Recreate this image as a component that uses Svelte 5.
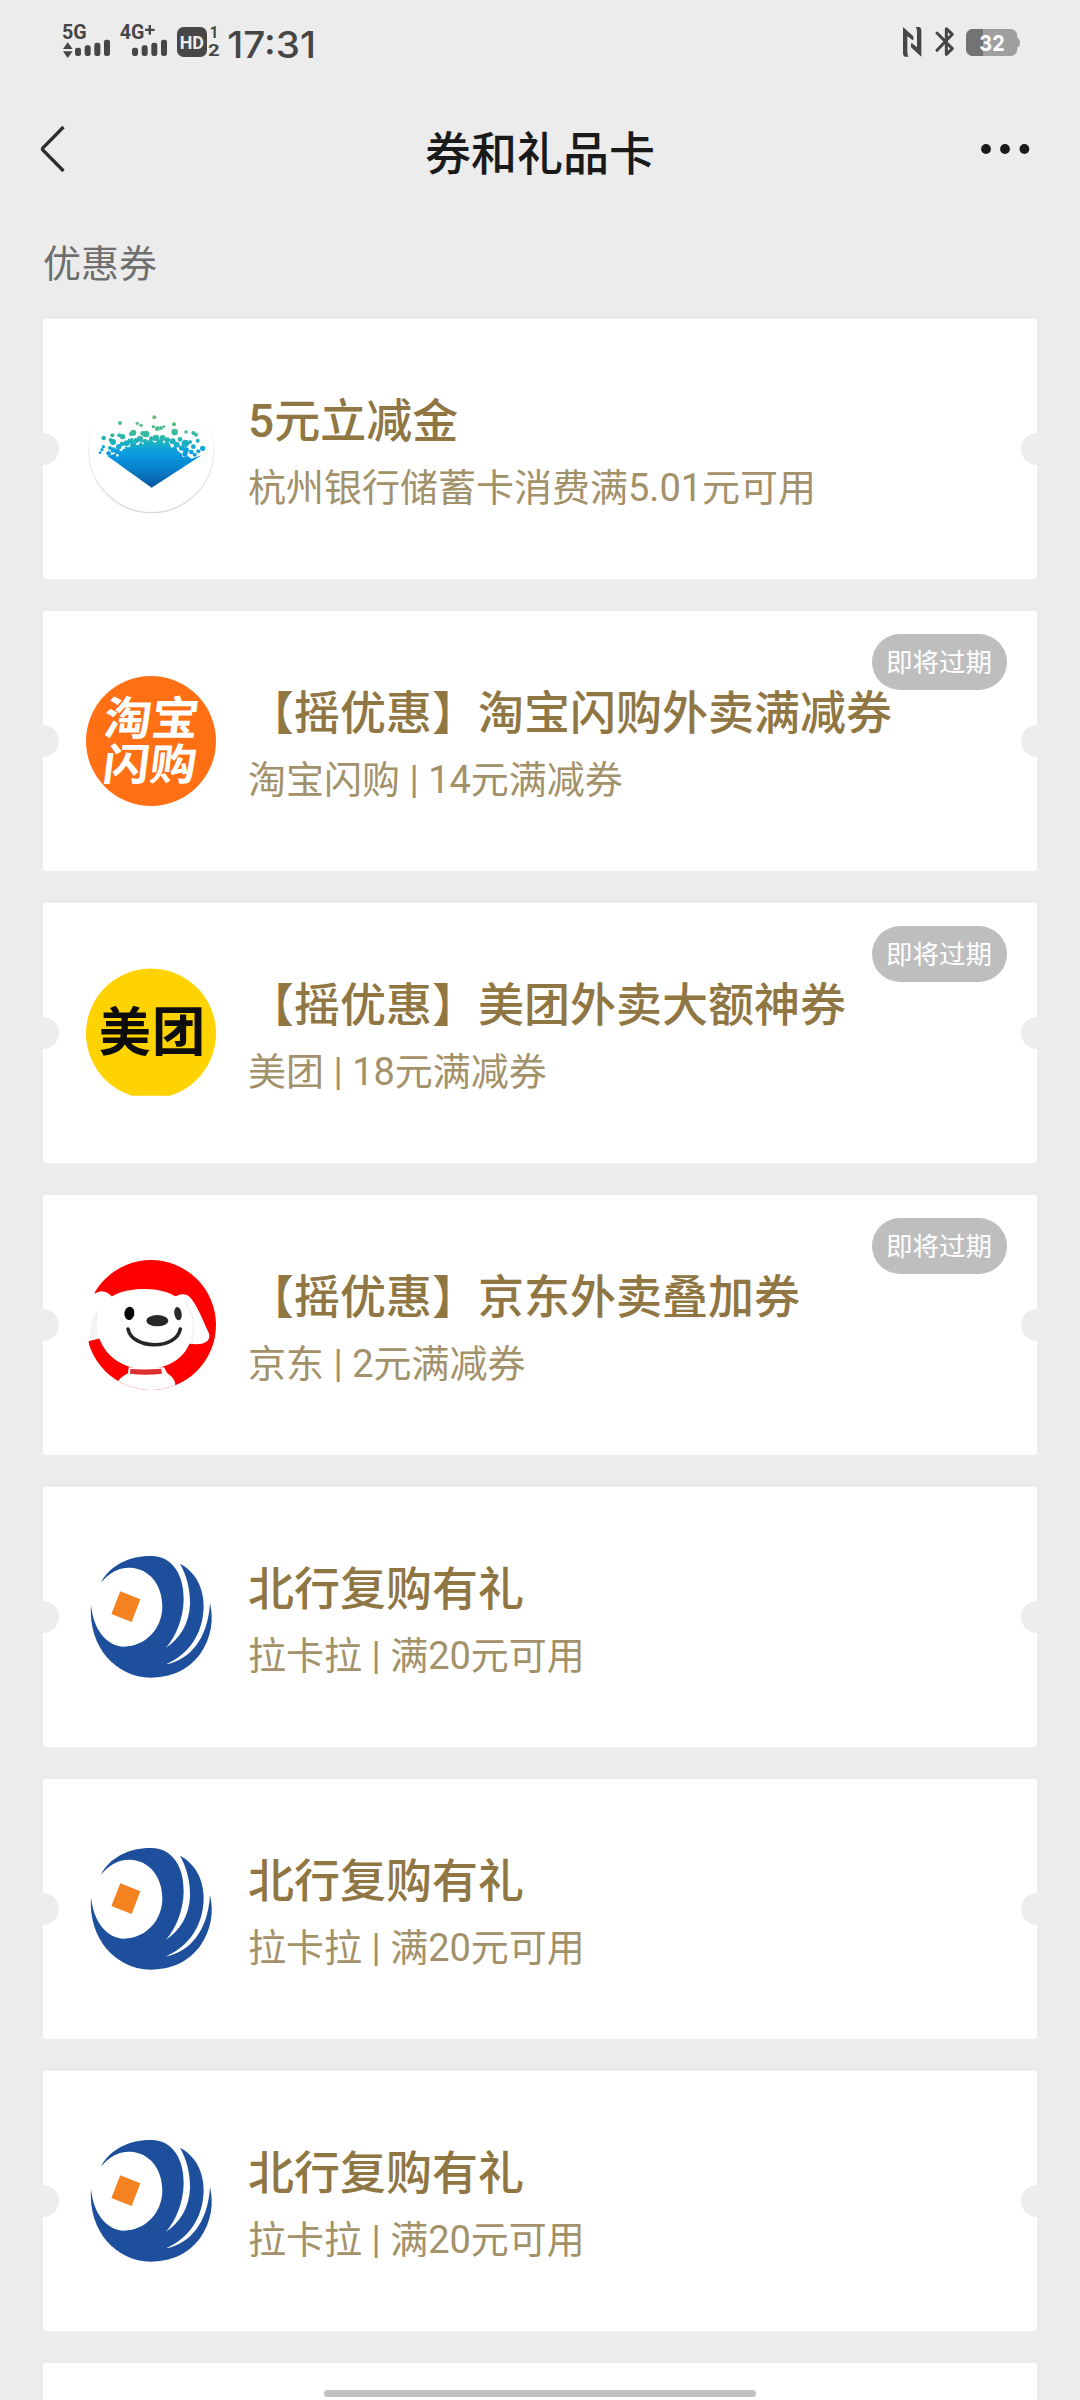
<script lang="ts">
	type Logo = 'hzbank' | 'taobao' | 'meituan' | 'jd' | 'lakala';
	type Coupon = { logo: Logo; title: string; desc: string; expiring?: boolean };

	const coupons: Coupon[] = [
		{ logo: 'hzbank', title: '5元立减金', desc: '杭州银行储蓄卡消费满5.01元可用' },
		{ logo: 'taobao', title: '【摇优惠】淘宝闪购外卖满减券', desc: '淘宝闪购 | 14元满减券', expiring: true },
		{ logo: 'meituan', title: '【摇优惠】美团外卖大额神券', desc: '美团 | 18元满减券', expiring: true },
		{ logo: 'jd', title: '【摇优惠】京东外卖叠加券', desc: '京东 | 2元满减券', expiring: true },
		{ logo: 'lakala', title: '北行复购有礼', desc: '拉卡拉 | 满20元可用' },
		{ logo: 'lakala', title: '北行复购有礼', desc: '拉卡拉 | 满20元可用' },
		{ logo: 'lakala', title: '北行复购有礼', desc: '拉卡拉 | 满20元可用' }
	];

	// x, y, radius of the particles above the blue gem
	const particles = [
		[270, 339, 6], [373, 322, 6], [432, 343, 6], [322, 340, 5], [333, 346, 5],
		[370, 350, 5], [382, 356, 7], [393, 354, 6], [402, 350, 4], [434, 366, 10],
		[468, 366, 5], [490, 369, 6], [498, 374, 6], [310, 368, 9], [303, 372, 6],
		[348, 372, 10], [338, 370, 7], [268, 376, 6], [278, 380, 8], [247, 376, 6],
		[221, 384, 7], [249, 396, 9], [242, 390, 6], [503, 392, 6], [518, 415, 8],
		[466, 400, 11], [480, 396, 6], [450, 388, 7], [490, 410, 7], [505, 424, 6],
		[378, 384, 10], [364, 386, 7], [398, 384, 9], [412, 390, 8], [428, 394, 9],
		[440, 404, 9], [330, 386, 9], [318, 392, 8], [302, 392, 9], [290, 400, 9],
		[276, 402, 7], [266, 410, 8], [220, 410, 5], [216, 419, 5], [210, 428, 4],
		[240, 414, 6], [250, 420, 8], [236, 430, 7], [262, 424, 8], [484, 426, 7],
		[468, 420, 9], [455, 414, 8], [345, 396, 9], [360, 400, 10], [390, 398, 10],
		[410, 404, 9], [310, 406, 9], [494, 434, 6], [465, 432, 8]
	];
</script>

{#snippet hzbank()}
	<svg class="logo" viewBox="168 222 390 390">
		<defs>
			<linearGradient id="gem" gradientUnits="userSpaceOnUse" x1="0" y1="320" x2="0" y2="533">
				<stop offset="0" stop-color="#6cc070" />
				<stop offset="0.22" stop-color="#3cbb98" />
				<stop offset="0.36" stop-color="#1cb0c0" />
				<stop offset="0.5" stop-color="#0a9fe2" />
				<stop offset="0.7" stop-color="#0885d0" />
				<stop offset="1" stop-color="#0a56a0" />
			</linearGradient>
			<linearGradient id="rim" x1="0" y1="0" x2="0" y2="1">
				<stop offset="0.25" stop-color="#fff" />
				<stop offset="1" stop-color="#d8d8d8" />
			</linearGradient>
		</defs>
		<circle cx="364" cy="420" r="188" fill="#fff" stroke="url(#rim)" stroke-width="4" />
		<path
			fill="url(#gem)"
			d="M232 438l22-6 8-12 14 4 6-14 16 2 8-10 18 4 10-12 14 6 12-10 14 8 16-6 12 10 14-4 8 12 14 0 6 14 10 4 4 14 16-4 10 8 31-10L365 533Z"
		/>
		{#each particles as [cx, cy, r]}
			<circle {cx} {cy} {r} fill="url(#gem)" />
		{/each}
		<g fill="#fff">
			<circle cx="300" cy="384" r="3" />
			<circle cx="338" cy="400" r="3" />
			<circle cx="282" cy="414" r="3" />
			<circle cx="425" cy="410" r="3" />
			<circle cx="454" cy="426" r="4" />
			<circle cx="262" cy="436" r="4" />
			<circle cx="475" cy="412" r="3" />
		</g>
	</svg>
{/snippet}

{#snippet taobao()}
	<svg class="logo" viewBox="48 48 390 390">
		<circle cx="243" cy="243" r="195" fill="#ff7014" />
		<g class="logo-text" fill="#fff" transform="translate(243 0) skewX(-7)">
			<text x="-118" y="226" font-size="138" textLength="284" lengthAdjust="spacingAndGlyphs">淘宝</text>
			<text x="-104" y="361" font-size="130" textLength="280" lengthAdjust="spacingAndGlyphs">闪购</text>
		</g>
	</svg>
{/snippet}

{#snippet meituan()}
	<svg class="logo" viewBox="48 54 390 390">
		<path fill="#ffd300" d="M186 437A195 195 0 1 1 300 437Z" />
		<g class="logo-text" fill="#0d0d0d">
			<text x="86" y="303" font-size="156">美</text>
			<text x="246" y="303" font-size="160">团</text>
		</g>
	</svg>
{/snippet}

{#snippet jd()}
	<svg class="logo" viewBox="48 60 390 390">
		<defs>
			<clipPath id="jd-round"><circle cx="243" cy="255" r="195" /></clipPath>
		</defs>
		<g clip-path="url(#jd-round)">
			<path fill="#fe0000" d="M74 162L74 60H438V450H56V303L100 290V170Z" />
			<path fill="#fff" d="M40 170L74 162C94 146 114 156 126 170L110 290 56 303 40 310Z" />
			<path fill="#fff" d="M312 174C326 160 350 158 364 176C386 204 402 250 416 278C424 298 410 312 378 313L350 310Z" />
			<path fill="#f3f3f3" d="M84 210C68 226 58 262 60 296L82 286Z" />
			<path fill="none" stroke="#f2f2f2" stroke-width="5" d="M346 190C374 222 378 270 362 312" />
			<path
				fill="#fff"
				d="M122 172C150 152 190 147 226 147C264 147 296 156 322 172C352 190 368 222 368 264C366 334 316 386 228 387C142 388 82 326 81 254C80 222 94 190 122 172Z"
			/>
			<path fill="#fff" d="M176 382L282 382 292 400C306 410 316 420 316 436L322 470 130 470 144 424C152 412 164 406 174 400Z" />
			<path fill="#dc2f2f" d="M181 387Q228 390 274 386L276 401Q228 407 180 401Z" />
		</g>
		<ellipse cx="178" cy="220" rx="15" ry="20" fill="#060606" transform="rotate(7 178 220)" />
		<ellipse cx="324" cy="221" rx="11" ry="20" fill="#2a2a2a" transform="rotate(-10 324 221)" />
		<ellipse cx="262" cy="242" rx="33" ry="17" fill="#282828" />
		<path fill="none" stroke="#262626" stroke-width="11" stroke-linecap="round" d="M174 267C186 328 318 332 331 267" />
	</svg>
{/snippet}

{#snippet lakala()}
	<svg class="logo" viewBox="48 51 390 390">
		<path
			fill="#1d4f9c"
			d="M93 143C118 92 178 62 244 63C310 64 342 122 341 194C340 250 318 304 288 338C330 312 358 264 360 208C361 164 350 122 330 86C376 110 401 158 401 212C400 296 358 356 288 388C358 376 414 312 420 204C432 256 424 308 390 358C352 408 300 428 242 428C138 427 54 336 63 210C70 284 110 334 162 335C226 334 277 282 277 214C277 150 238 100 180 98C146 97 116 114 93 143Z"
		/>
		<path fill="#f58220" d="M151 169L211 193 185 261 124 237Z" />
	</svg>
{/snippet}

<div class="page">
	<header class="status-bar">
		<svg width="300" height="70" viewBox="0 0 900 210" fill="#464646">
			<g class="status-text">
				<text x="66" y="87" font-size="59" textLength="74" lengthAdjust="spacingAndGlyphs">5G</text>
				<text x="239" y="87" font-size="59" textLength="74" lengthAdjust="spacingAndGlyphs">4G</text>
				<text x="509" y="85" font-size="48" textLength="26" lengthAdjust="spacingAndGlyphs">1</text>
				<text x="504" y="138" font-size="50" textLength="35" lengthAdjust="spacingAndGlyphs">2</text>
			</g>
			<path d="M326 45h7v11h11v7h-11v11h-7V63h-11v-7h11Z" />
			<path d="M83 97l15 20H69ZM69 124h29L83 144Z" />
			<rect x="105" y="113" width="18" height="25" rx="7" />
			<rect x="134" y="106" width="18" height="32" rx="7" />
			<rect x="163" y="98" width="18" height="40" rx="7" />
			<rect x="192" y="89" width="18" height="49" rx="7" />
			<rect x="276" y="113" width="18" height="25" rx="7" />
			<rect x="305" y="106" width="18" height="32" rx="7" />
			<rect x="334" y="98" width="18" height="40" rx="7" />
			<rect x="363" y="89" width="18" height="49" rx="7" />
			<rect x="411" y="51" width="90" height="90" rx="20" />
			<text class="status-text" x="419" y="116" font-size="54" fill="#ececec" textLength="73" lengthAdjust="spacingAndGlyphs">HD</text>
			<text class="clock" x="562" y="143" font-size="110" textLength="266" lengthAdjust="spacingAndGlyphs">17:31</text>
		</svg>
		<svg width="160" height="70" viewBox="0 0 480 210">
			<path fill="#464646" d="M69 51L100 79V89L98 91 82 78V126Q82 135 86 140H76Q69 139 69 128ZM124 140L93 112V102L95 99 111 112V65Q111 56 107 51H117Q124 52 124 63Z" />
			<path fill="none" stroke="#464646" stroke-width="9" stroke-linejoin="round" stroke-linecap="round" d="M171 69L217 116 199 133V56L217 73 171 121" />
			<path fill="#9f9f9f" d="M278 57h114a20 20 0 0 1 20 20v7q8 2 8 14t-8 14v6a20 20 0 0 1-20 20H278a20 20 0 0 1-20-20V77a20 20 0 0 1 20-20Z" />
			<path fill="#737373" d="M309 57v81h-31a20 20 0 0 1-20-20V77a20 20 0 0 1 20-20Z" />
			<text class="battery" x="298" y="122" font-size="66" fill="#fff" textLength="76" lengthAdjust="spacingAndGlyphs">32</text>
		</svg>
	</header>

	<nav class="nav-bar">
		<svg width="28" height="50" viewBox="0 0 28 50" fill="none" stroke="#2e2e2e" stroke-width="3.4">
			<path d="M25.5 3L5 23.8Q4 25 5 26.2L25.5 47" />
		</svg>
		<h1>券和礼品卡</h1>
		<svg width="50" height="12" viewBox="0 0 50 12" fill="#1a1a1a">
			<circle cx="6" cy="6" r="4.9" />
			<circle cx="25" cy="6" r="4.9" />
			<circle cx="44.4" cy="6" r="4.9" />
		</svg>
	</nav>

	<main>
		<h2>优惠券</h2>
		<ul>
			{#each coupons as coupon}
				<li class="coupon">
					{#if coupon.logo === 'hzbank'}
						{@render hzbank()}
					{:else if coupon.logo === 'taobao'}
						{@render taobao()}
					{:else if coupon.logo === 'meituan'}
						{@render meituan()}
					{:else if coupon.logo === 'jd'}
						{@render jd()}
					{:else}
						{@render lakala()}
					{/if}
					<div class="info">
						<div class="title">{coupon.title}</div>
						<div class="desc">{coupon.desc}</div>
					</div>
					{#if coupon.expiring}
						<span class="badge">即将过期</span>
					{/if}
				</li>
			{/each}
			<li class="coupon"></li>
		</ul>
	</main>

	<div class="home-indicator"></div>
</div>

<style>
	:global(body) {
		margin: 0;
		background: #ececec;
	}

	.page {
		position: relative;
		width: 1080px;
		height: 2400px;
		overflow: hidden;
		background: #ececec;
		font-family: Roboto, 'Noto Sans CJK SC', sans-serif;
	}

	.status-bar {
		display: flex;
		justify-content: space-between;
		height: 70px;
		padding: 10px 40px 0;
	}

	.status-text {
		font-family: Roboto, sans-serif;
		font-weight: 700;
	}

	.clock {
		font-family: Inter, sans-serif;
		font-weight: 500;
	}

	.battery {
		font-family: Inter, sans-serif;
		font-weight: 700;
	}

	.nav-bar {
		display: grid;
		grid-template-columns: 50px 1fr 50px;
		align-items: center;
		height: 138px;
		padding: 0 50px 0 38px;
	}

	h1 {
		margin: 0 0 0 12px;
		padding-top: 9px;
		font-size: 46px;
		font-weight: 500;
		line-height: 60px;
		text-align: center;
		color: #1a1a1a;
	}

	main {
		padding: 0 43px;
	}

	h2 {
		height: 101px;
		margin: 0;
		font-size: 38px;
		font-weight: 400;
		line-height: 92px;
		color: #6e6e6e;
	}

	ul {
		display: flex;
		flex-direction: column;
		gap: 32px;
		margin: 0;
		padding: 0;
		list-style: none;
	}

	.coupon {
		position: relative;
		display: flex;
		align-items: center;
		gap: 32px;
		box-sizing: border-box;
		height: 260px;
		padding: 0 43px;
		border-radius: 3px;
		background: #fff;
	}

	/* ticket notches */
	.coupon::before,
	.coupon::after {
		content: '';
		position: absolute;
		top: 114px;
		width: 32px;
		height: 32px;
		border-radius: 50%;
		background: #ececec;
	}

	.coupon::before {
		left: -16px;
	}

	.coupon::after {
		right: -16px;
	}

	.logo {
		flex: none;
		width: 130px;
		height: 130px;
	}

	.logo-text {
		font-family: 'Noto Sans CJK SC', sans-serif;
		font-weight: 700;
	}

	.info {
		padding-top: 10px;
		white-space: nowrap;
	}

	.title {
		font-size: 46px;
		font-weight: 500;
		line-height: 68px;
		color: #8f7643;
	}

	.desc {
		font-size: 38px;
		line-height: 66px;
		color: #a3916a;
	}

	.badge {
		position: absolute;
		top: 23px;
		right: 30px;
		width: 135px;
		height: 56px;
		border-radius: 28px;
		background: #bebebe;
		font-size: 26.5px;
		line-height: 58px;
		text-align: center;
		text-indent: -1px;
		color: #fff;
	}

	.home-indicator {
		position: absolute;
		left: 324px;
		bottom: 3px;
		width: 432px;
		height: 7px;
		border-radius: 4px;
		background: #c1c1c1;
	}
</style>
